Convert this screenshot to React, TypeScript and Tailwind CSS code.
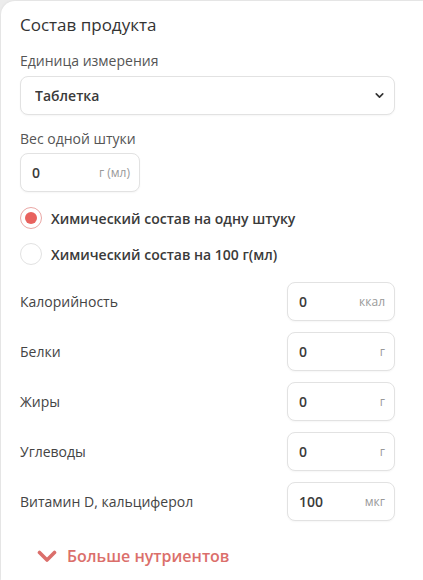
import { ChevronDown } from 'lucide-react';

// Nutrient rows shown under the radio switch
const nutrients = [
  { label: 'Калорийность', value: '0', unit: 'ккал' },
  { label: 'Белки', value: '0', unit: 'г' },
  { label: 'Жиры', value: '0', unit: 'г' },
  { label: 'Углеводы', value: '0', unit: 'г' },
  { label: 'Витамин D, кальциферол', value: '100', unit: 'мкг' },
];

const UnitInput = ({ value, unit, width }: { value: string; unit: string; width: string }) => (
  <div
    className={`${width} h-[39px] flex items-center justify-between pl-[11px] pr-[9px] border border-[#e2e2e2] rounded-lg bg-white shadow-[0_1px_2px_rgba(0,0,0,0.04)]`}
  >
    <span className="text-[14px] font-semibold text-[#3a3a3a]">{value}</span>
    <span className="text-[12px] text-[#999]">{unit}</span>
  </div>
);

const Radio = ({ checked, label }: { checked?: boolean; label: string }) => (
  <label className="flex items-center gap-[9px] cursor-pointer">
    <span
      className={`w-[22px] h-[22px] rounded-full border flex items-center justify-center bg-white ${
        checked ? 'border-[#eaa7a5]' : 'border-[#e2e2e2]'
      }`}
    >
      {checked && <span className="w-[12px] h-[12px] rounded-full bg-[#e8625e]" />}
    </span>
    <span className="text-[14px] font-semibold text-[#3a3a3a]">{label}</span>
  </label>
);

const App = () => {
  return (
    <div className="min-h-screen bg-[#ececec] pt-px pl-px" style={{ fontFamily: '"Open Sans", "Noto Sans", sans-serif' }}>
      <div className="bg-white rounded-tl-[14px] shadow-[0_0_3px_rgba(0,0,0,0.08)] pl-[19px] pr-[28px] pt-3 pb-3 min-h-[579px]">
        {/* Header */}
        <h2 className="text-[17px] leading-6 text-[#333]">Состав продукта</h2>

        {/* Unit select */}
        <p className="mt-[14px] text-[14px] leading-5 text-[#555]">Единица измерения</p>
        <div className="relative mt-[5px]">
          <select className="w-full h-[39px] appearance-none rounded-lg border border-[#e2e2e2] bg-white pl-[14px] text-[14px] font-semibold text-[#3a3a3a] outline-none shadow-[0_1px_2px_rgba(0,0,0,0.04)]">
            <option>Таблетка</option>
          </select>
          <ChevronDown className="absolute right-[9px] top-[13px] w-[13px] h-[13px] text-[#333] pointer-events-none" strokeWidth={3} />
        </div>

        {/* Single piece weight */}
        <p className="mt-[14px] text-[14px] leading-5 text-[#555]">Вес одной штуки</p>
        <div className="mt-[4px]">
          <UnitInput value="0" unit="г (мл)" width="w-[120px]" />
        </div>

        {/* Mode switch */}
        <div className="mt-[15px] flex flex-col gap-[14px]">
          <Radio checked label="Химический состав на одну штуку" />
          <Radio label="Химический состав на 100 г(мл)" />
        </div>

        {/* Nutrients */}
        <div className="mt-[17px] flex flex-col gap-[11px]">
          {nutrients.map((n) => (
            <div key={n.label} className="flex items-center justify-between">
              <span className="text-[14px] text-[#444]">{n.label}</span>
              <UnitInput value={n.value} unit={n.unit} width="w-[108px]" />
            </div>
          ))}
        </div>

        {/* More */}
        <button className="mt-[23px] ml-[17px] flex items-center gap-[10px] text-[16px] leading-6 font-semibold text-[#db6f6b]">
          <svg width="20" height="13" viewBox="0 0 20 13" fill="none" className="shrink-0">
            <polyline points="2.5,2.5 10,10 17.5,2.5" stroke="currentColor" strokeWidth="3.6" strokeLinecap="round" strokeLinejoin="round" />
          </svg>
          Больше нутриентов
        </button>
      </div>
    </div>
  );
};

export default App;
